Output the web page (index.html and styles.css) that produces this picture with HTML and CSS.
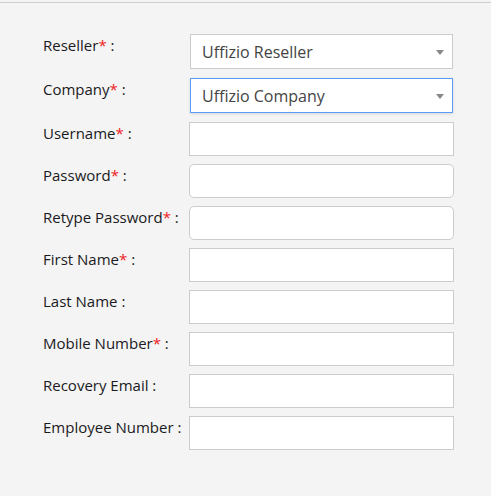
FILE: index.html
```html
<!DOCTYPE html>
<html>
<head>
<meta charset="utf-8">
<link rel="stylesheet" href="styles.css">
</head>
<body>
<div class="page">
  <form class="form">
    <label class="lbl">Reseller<span class="req">*</span> :</label>
    <div class="select"><span class="val">Uffizio Reseller</span><span class="caret"></span></div>

    <label class="lbl">Company<span class="req">*</span> :</label>
    <div class="select focus"><span class="val">Uffizio Company</span><span class="caret"></span></div>

    <label class="lbl">Username<span class="req">*</span> :</label>
    <div class="input"></div>

    <label class="lbl">Password<span class="req">*</span> :</label>
    <div class="input round"></div>

    <label class="lbl">Retype Password<span class="req">*</span> :</label>
    <div class="input round"></div>

    <label class="lbl">First Name<span class="req">*</span> :</label>
    <div class="input"></div>

    <label class="lbl">Last Name :</label>
    <div class="input"></div>

    <label class="lbl">Mobile Number<span class="req">*</span> :</label>
    <div class="input"></div>

    <label class="lbl">Recovery Email :</label>
    <div class="input"></div>

    <label class="lbl">Employee Number :</label>
    <div class="input"></div>
  </form>
</div>
</body>
</html>
```
FILE: styles.css
```css
html, body {
  margin: 0;
  padding: 0;
  background: #f4f4f4;
  height: 100%;
}
body {
  font-family: "Open Sans", "Liberation Sans", sans-serif;
  color: #1a1a22;
}
.page {
  margin-top: 2px;
  border-top: 1px solid #cfcfcf;
  padding: 31px 0 0 43px;
}
.form {
  display: grid;
  grid-template-columns: 146px 265px;
  row-gap: 8px;
  align-items: start;
}
.lbl {
  font-size: 15px;
  line-height: 20px;
  padding-top: 1px;
  white-space: nowrap;
}
.req {
  color: #ee1c1c;
}
.input {
  box-sizing: border-box;
  height: 34px;
  background: #fff;
  border: 1px solid #cccccc;
}
.input.round {
  border-radius: 5px;
}
.select {
  box-sizing: border-box;
  height: 35px;
  margin: 0 1px 1px;
  background: #fff;
  border: 1px solid #cccccc;
  display: flex;
  align-items: center;
  justify-content: space-between;
  padding: 0 8px 0 11px;
  color: #444;
  font-size: 16px;
}
.select.focus {
  border-color: #5b9cf5;
  box-shadow: 0 1px 3px rgba(0,0,0,0.12);
}
.caret {
  width: 0;
  height: 0;
  border-left: 4px solid transparent;
  border-right: 4px solid transparent;
  border-top: 5px solid #888;
  margin-top: 2px;
}
```
